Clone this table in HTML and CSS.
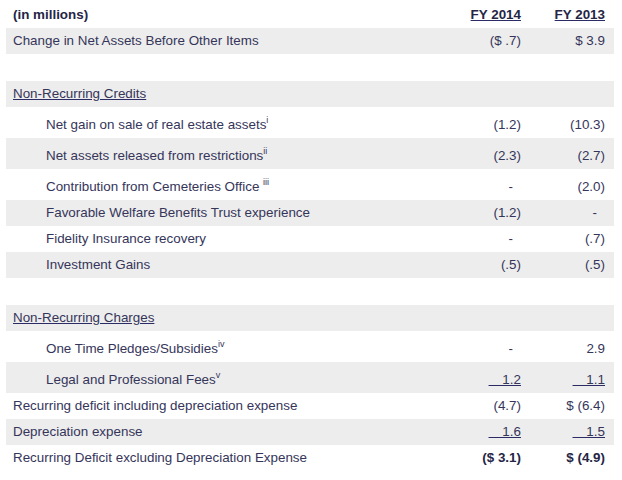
FILE: index.html
```html
<!DOCTYPE html>
<html>
<head>
<meta charset="utf-8">
<link rel="stylesheet" href="styles.css">
</head>
<body>
<div class="wrap">
<table class="fin">
  <colgroup><col class="c-label"><col class="c-num"><col class="c-num"></colgroup>
  <tr class="head">
    <td class="lbl bold">(in millions)</td>
    <td class="num bold"><span class="ul">FY 2014</span></td>
    <td class="num bold"><span class="ul">FY 2013</span></td>
  </tr>
  <tr class="shade">
    <td class="lbl">Change in Net Assets Before Other Items</td>
    <td class="num">($ .7)</td>
    <td class="num">$ 3.9</td>
  </tr>
  <tr class="blank"><td></td><td></td><td></td></tr>
  <tr class="shade">
    <td class="lbl"><span class="ul">Non-Recurring Credits</span></td>
    <td class="num"></td>
    <td class="num"></td>
  </tr>
  <tr class="tall">
    <td class="lbl ind">Net gain on sale of real estate assets<sup>i</sup></td>
    <td class="num">(1.2)</td>
    <td class="num">(10.3)</td>
  </tr>
  <tr class="shade tall">
    <td class="lbl ind">Net assets released from restrictions<sup>ii</sup></td>
    <td class="num">(2.3)</td>
    <td class="num">(2.7)</td>
  </tr>
  <tr class="tall">
    <td class="lbl ind">Contribution from Cemeteries Office <sup>iii</sup></td>
    <td class="num"><span class="dash">-</span></td>
    <td class="num">(2.0)</td>
  </tr>
  <tr class="shade">
    <td class="lbl ind">Favorable Welfare Benefits Trust experience</td>
    <td class="num">(1.2)</td>
    <td class="num"><span class="dash">-</span></td>
  </tr>
  <tr>
    <td class="lbl ind">Fidelity Insurance recovery</td>
    <td class="num"><span class="dash">-</span></td>
    <td class="num">(.7)</td>
  </tr>
  <tr class="shade">
    <td class="lbl ind">Investment Gains</td>
    <td class="num">(.5)</td>
    <td class="num">(.5)</td>
  </tr>
  <tr class="blank"><td></td><td></td><td></td></tr>
  <tr class="shade">
    <td class="lbl"><span class="ul">Non-Recurring Charges</span></td>
    <td class="num"></td>
    <td class="num"></td>
  </tr>
  <tr class="tall">
    <td class="lbl ind">One Time Pledges/Subsidies<sup>iv</sup></td>
    <td class="num"><span class="dash">-</span></td>
    <td class="num">2.9</td>
  </tr>
  <tr class="shade tall">
    <td class="lbl ind">Legal and Professional Fees<sup>v</sup></td>
    <td class="num"><span class="ul">&nbsp;&nbsp;&nbsp;&thinsp;1.2</span></td>
    <td class="num"><span class="ul">&nbsp;&nbsp;&nbsp;&thinsp;1.1</span></td>
  </tr>
  <tr>
    <td class="lbl">Recurring deficit including depreciation expense</td>
    <td class="num">(4.7)</td>
    <td class="num">$ (6.4)</td>
  </tr>
  <tr class="shade">
    <td class="lbl">Depreciation expense</td>
    <td class="num"><span class="ul">&nbsp;&nbsp;&nbsp;&thinsp;1.6</span></td>
    <td class="num"><span class="ul">&nbsp;&nbsp;&nbsp;&thinsp;1.5</span></td>
  </tr>
  <tr>
    <td class="lbl">Recurring Deficit excluding Depreciation Expense</td>
    <td class="num bold">($ 3.1)</td>
    <td class="num bold">$ (4.9)</td>
  </tr>
</table>
</div>
</body>
</html>
```

FILE: styles.css
```css
html, body {
  margin: 0;
  padding: 0;
  background: #ffffff;
}
.wrap {
  padding: 0 8px 0 6px;
}
.fin {
  width: 608px;
  border-collapse: collapse;
  table-layout: fixed;
  font-family: "Liberation Sans", Arial, sans-serif;
  font-size: 13.4px;
  color: #35355a;
}
.c-label { width: 440px; }
.c-num { width: 84px; }
.fin td {
  height: 26px;
  padding: 0;
  line-height: 16px;
  vertical-align: middle;
  white-space: nowrap;
}
.fin tr.head td {
  height: 27px;
  padding-top: 1px;
}
.fin tr.tall td {
  height: 26px;
  padding-top: 5px;
}
.fin tr.blank td { height: 27px; }
.fin tr.shade td { background: #ededed; }
.lbl { padding-left: 7px !important; }
.lbl.ind { padding-left: 40px !important; }
.num {
  text-align: right;
  padding-right: 9px !important;
}
.bold {
  font-weight: bold;
  color: #252545;
}
.ul {
  text-decoration: underline;
  text-decoration-color: #2b2b66;
}
.dash { padding-right: 8px; }
sup {
  font-size: 9px;
  line-height: 0;
  vertical-align: 6px;
}
```
